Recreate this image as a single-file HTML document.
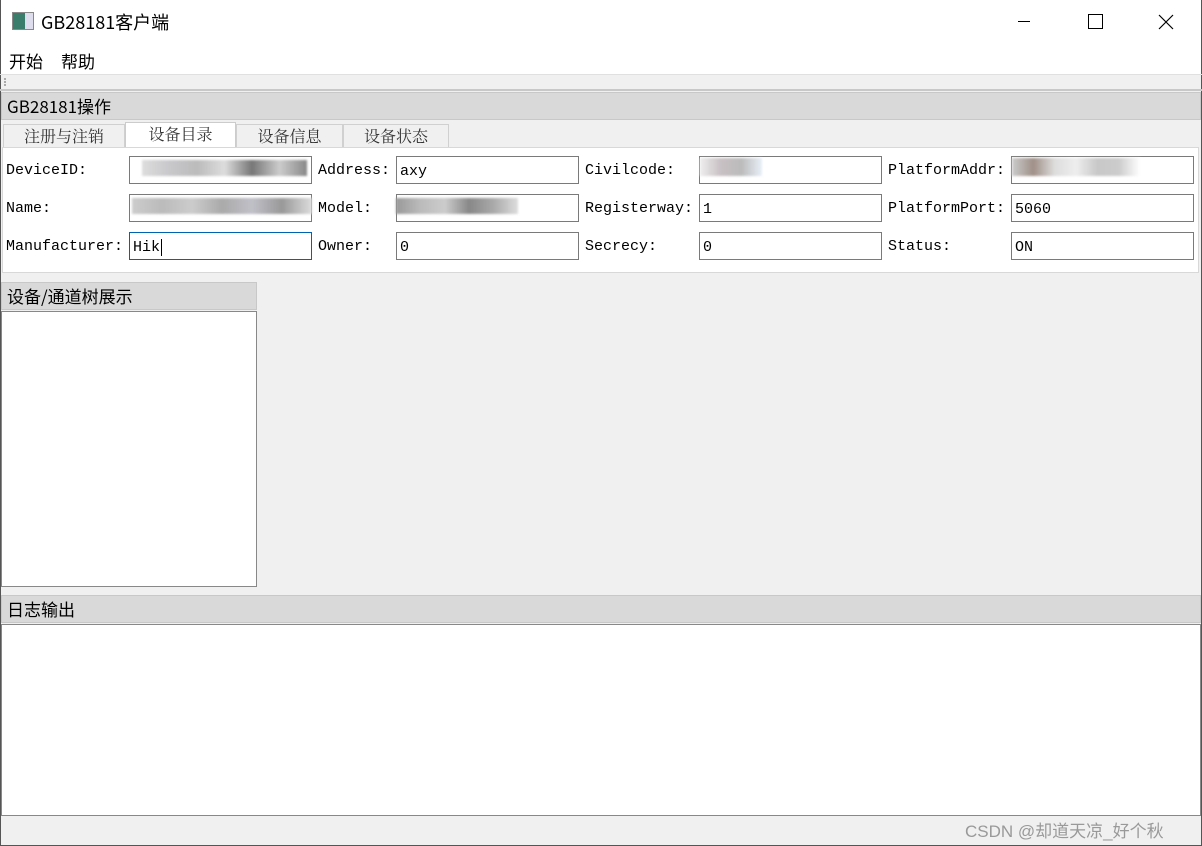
<!DOCTYPE html><html><head><meta charset="utf-8"><style>
*{margin:0;padding:0;box-sizing:border-box}
body{width:1202px;height:846px;overflow:hidden;background:#f0f0f0;position:relative;font-family:"Liberation Sans","Noto Sans CJK SC",sans-serif;}
.a{position:absolute}
.m{font-family:"Liberation Mono","Noto Serif CJK SC",monospace;font-size:15px;color:#000}
.in{position:absolute;background:#fff;border:1px solid #7a7a7a;height:28px;padding-left:3px;line-height:29px}
.bl{position:absolute;height:10px;filter:blur(1px)}
.tab{position:absolute;top:124px;height:24px;border:1px solid #d0d0d0;border-bottom:none;background:#f0f0f0;font-family:"Noto Serif CJK SC",serif;font-size:16px;color:#333;text-align:center;line-height:22px}
.hd{position:absolute;background:#d9d9d9;border:1px solid #c8c8c8;font-size:17px;font-family:"Noto Sans CJK SC",sans-serif;color:#000;padding-left:5px;line-height:26px}
</style></head><body>
<div class="a" style="left:0;top:0;width:1202px;height:75px;background:#fff"></div>
<div class="a" style="left:0;top:0;width:1px;height:846px;background:#555"></div>
<div class="a" style="left:1201px;top:0;width:1px;height:846px;background:#555"></div>
<div class="a" style="left:0;top:845px;width:1202px;height:1px;background:#555"></div>
<div class="a" style="left:12px;top:12px;width:22px;height:18px;border:1px solid #888;background:linear-gradient(90deg,#3a7d6a 0 60%,#dde 60%)"></div>
<div class="a" style="left:41px;top:9px;font-size:18px;font-family:'Noto Sans CJK SC',sans-serif">GB28181客户端</div>
<div class="a" style="left:1018px;top:21px;width:12px;height:1px;background:#000"></div>
<div class="a" style="left:1088px;top:14px;width:15px;height:15px;border:1px solid #000"></div>
<svg class="a" style="left:1158px;top:14px" width="16" height="16"><path d="M1 1L15 15M15 1L1 15" stroke="#000" stroke-width="1.2"/></svg>
<div class="a" style="left:9px;top:48px;font-size:17px;font-family:'Noto Sans CJK SC',sans-serif">开始</div>
<div class="a" style="left:61px;top:48px;font-size:17px;font-family:'Noto Sans CJK SC',sans-serif">帮助</div>
<div class="a" style="left:0;top:74px;width:1202px;height:1px;background:#e0e0e0"></div>
<div class="a" style="left:4px;top:78px;width:2px;height:8px;border-left:2px dotted #aaa"></div>
<div class="a" style="left:0;top:89px;width:1202px;height:2px;background:#c8c8c8"></div>
<div class="hd" style="left:1px;top:92px;width:1200px;height:28px">GB28181操作</div>
<div class="tab" style="left:3px;width:122px">注册与注销</div>
<div class="tab" style="left:125px;top:122px;height:26px;width:111px;background:#fff;border-color:#ccc">设备目录</div>
<div class="tab" style="left:236px;width:107px">设备信息</div>
<div class="tab" style="left:343px;width:106px">设备状态</div>
<div class="a" style="left:2px;top:147px;width:1197px;height:126px;background:#fff;border:1px solid #d8d8d8"></div>
<div class="a m" style="left:6px;top:162px">DeviceID:</div>
<div class="a m" style="left:6px;top:200px">Name:</div>
<div class="a m" style="left:6px;top:238px">Manufacturer:</div>
<div class="a m" style="left:318px;top:162px">Address:</div>
<div class="a m" style="left:318px;top:200px">Model:</div>
<div class="a m" style="left:318px;top:238px">Owner:</div>
<div class="a m" style="left:585px;top:162px">Civilcode:</div>
<div class="a m" style="left:585px;top:200px">Registerway:</div>
<div class="a m" style="left:585px;top:238px">Secrecy:</div>
<div class="a m" style="left:888px;top:162px">PlatformAddr:</div>
<div class="a m" style="left:888px;top:200px">PlatformPort:</div>
<div class="a m" style="left:888px;top:238px">Status:</div>
<div class="in m" style="left:129px;top:156px;width:183px"></div>
<div class="in m" style="left:129px;top:194px;width:183px"></div>
<div class="in m" style="left:129px;top:232px;width:183px;border-color:#0063b1">Hik<span style="border-left:1px solid #000;margin-left:1px"></span></div>
<div class="in m" style="left:396px;top:156px;width:183px">axy</div>
<div class="in m" style="left:396px;top:194px;width:183px"></div>
<div class="in m" style="left:396px;top:232px;width:183px">0</div>
<div class="in m" style="left:699px;top:156px;width:183px"></div>
<div class="in m" style="left:699px;top:194px;width:183px">1</div>
<div class="in m" style="left:699px;top:232px;width:183px">0</div>
<div class="in m" style="left:1011px;top:156px;width:183px"></div>
<div class="in m" style="left:1011px;top:194px;width:183px">5060</div>
<div class="in m" style="left:1011px;top:232px;width:183px">ON</div>
<div class="bl" style="left:142px;top:160px;width:165px;height:16px;background:linear-gradient(90deg,#ddd,#c8c8cc,#bbb,#ddd,#777,#ccc,#888)"></div>
<div class="bl" style="left:132px;top:198px;width:180px;height:16px;background:linear-gradient(90deg,#ccc,#bbb,#ccc,#aaa,#c0c0c8,#999,#ddd)"></div>
<div class="bl" style="left:396px;top:198px;width:122px;height:16px;background:linear-gradient(90deg,#999,#bbb,#ccc,#888,#aaa,#ddd)"></div>
<div class="bl" style="left:700px;top:158px;width:62px;height:18px;background:linear-gradient(90deg,#eee,#c8c0c4,#bbb,#e8f0f8)"></div>
<div class="bl" style="left:1012px;top:158px;width:128px;height:18px;background:linear-gradient(90deg,#ccc,#a09088,#ddd,#eee,#c8c8c8,#ccc,#fff)"></div>
<div class="hd" style="left:1px;top:282px;width:256px;height:28px">设备/通道树展示</div>
<div class="a" style="left:1px;top:311px;width:256px;height:276px;background:#fff;border:1px solid #888"></div>
<div class="hd" style="left:1px;top:595px;width:1200px;height:28px">日志输出</div>
<div class="a" style="left:1px;top:624px;width:1200px;height:192px;background:#fff;border:1px solid #888"></div>
<div class="a" style="left:965px;top:817px;font-size:17px;color:#999;font-family:'Liberation Sans','Noto Sans CJK SC',sans-serif">CSDN @却道天凉_好个秋</div>
</body></html>
